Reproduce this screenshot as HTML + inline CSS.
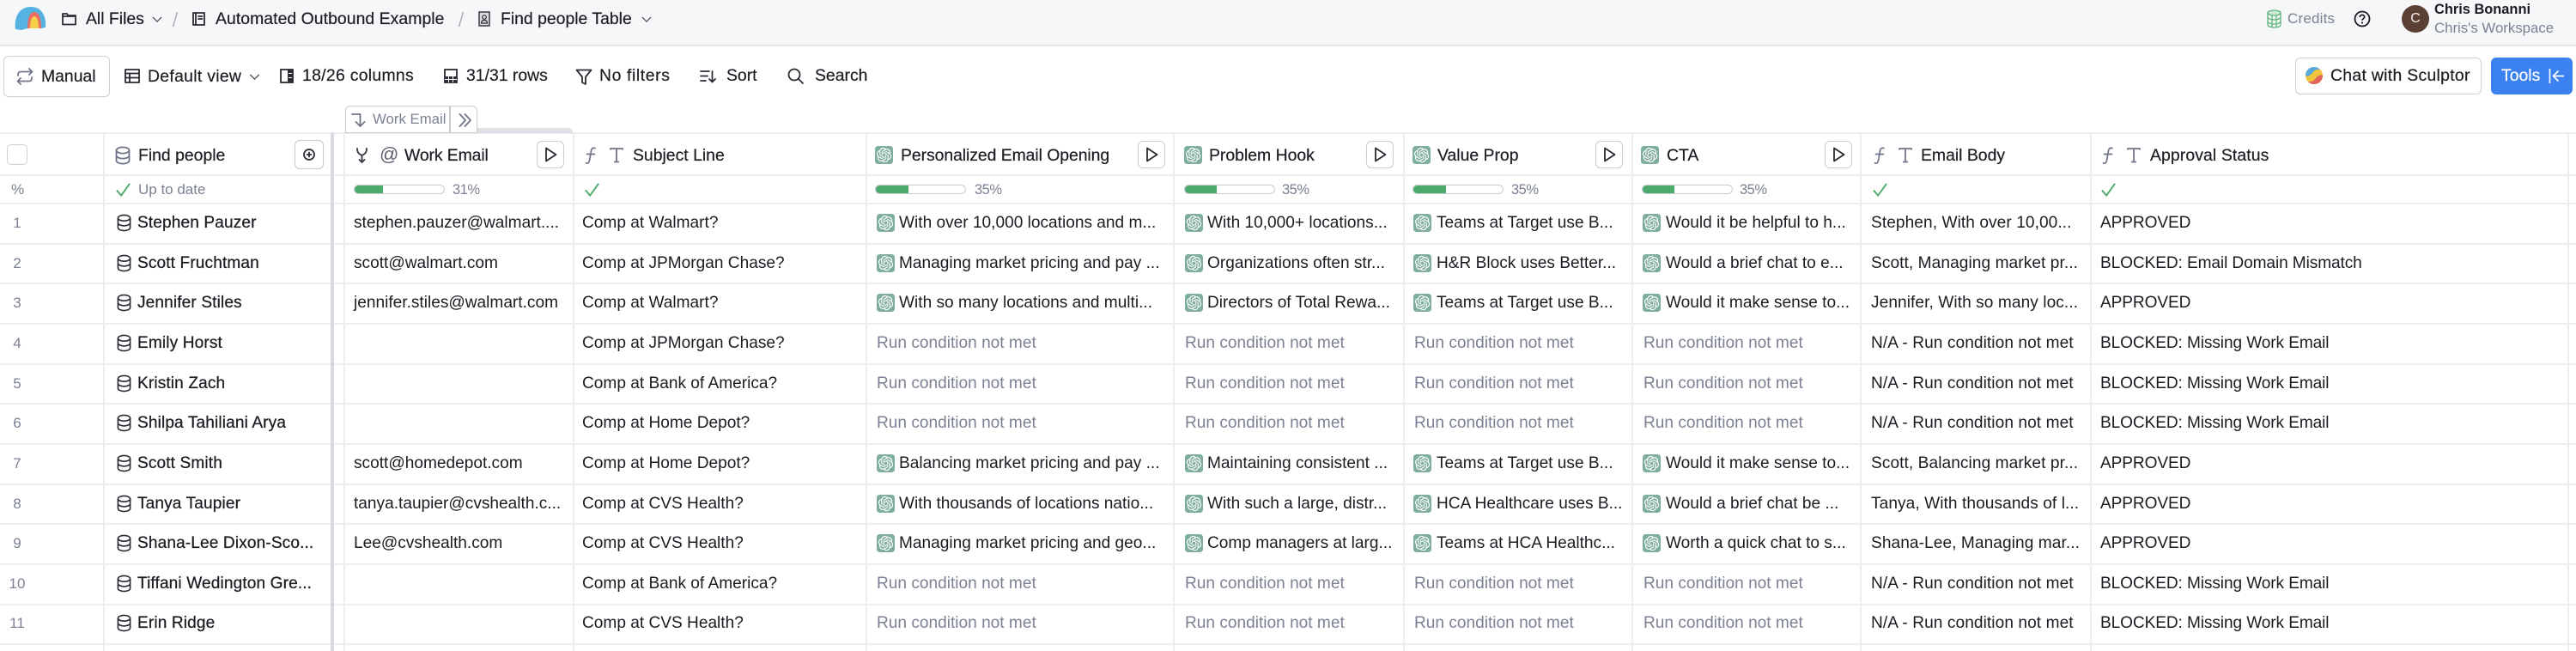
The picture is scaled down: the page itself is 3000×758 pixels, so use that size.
<!DOCTYPE html>
<html><head><meta charset="utf-8"><title>Find people Table</title>
<style>
*{box-sizing:border-box}
html,body{margin:0;padding:0;width:3000px;height:758px;overflow:hidden;background:#fff}
body{position:relative;font-family:"Liberation Sans",sans-serif;font-size:19.4px;letter-spacing:0;color:#1b1c22}
.t{position:absolute;white-space:nowrap;line-height:24px;-webkit-text-stroke:.2px currentColor}
.t.g{-webkit-text-stroke:0}
.g{color:#7c8193}
svg{position:absolute;overflow:visible}
.s{fill:none;stroke:#2a2b33;stroke-width:1.8;stroke-linecap:round;stroke-linejoin:round}
.sg{fill:none;stroke:#70758a;stroke-width:1.8;stroke-linecap:round;stroke-linejoin:round}
.v{position:absolute;top:155px;height:603px;width:2px;background:#eceef2}
.h{position:absolute;left:0;width:3000px;height:2px;background:#eceef2}
.r{position:absolute;left:0;width:3000px;height:46px;font-size:19.1px}
.r span{position:absolute;top:0;line-height:46.5px;white-space:nowrap}
.n{width:40px;left:0;text-align:center;color:#7c8193;font-size:17px}
.a{left:160px;letter-spacing:.12px;-webkit-text-stroke:.25px currentColor}.b{left:412px}.c{left:678px}.d{left:1047px}.e{left:1406px}.f{left:1673px}.i{left:1940px}.j{left:2179px;letter-spacing:.08px}.k{left:2446px;letter-spacing:-.1px}
.d.g,.e.g,.f.g,.i.g{margin-left:-26px}
.pb{position:absolute;top:215px;height:11px;width:106px;border:1px solid #c9cbd3;border-radius:6px;overflow:hidden;background:#fff}
.pb i{display:block;height:100%;background:#4caa6c}
.pl{position:absolute;top:164px;height:32px;width:32px;border:1px solid #c9cbd3;border-radius:6px;background:#fff}
.pc{font-size:16.5px;letter-spacing:-.5px;top:209px}
</style></head><body>
<svg width="0" height="0" style="position:absolute">
<defs>
<symbol id="ai" viewBox="0 0 21 21"><rect width="21" height="21" rx="3.5" fill="#7fae9d"/><g transform="translate(1.9 1.9) scale(.72)"><path fill="#fff" d="M22.2819 9.8211a5.9847 5.9847 0 0 0-.5157-4.9108 6.0462 6.0462 0 0 0-6.5098-2.9A6.0651 6.0651 0 0 0 4.9807 4.1818a5.9847 5.9847 0 0 0-3.9977 2.9 6.0462 6.0462 0 0 0 .7427 7.0966 5.98 5.98 0 0 0 .511 4.9107 6.051 6.051 0 0 0 6.5146 2.9001A5.9847 5.9847 0 0 0 13.2599 24a6.0557 6.0557 0 0 0 5.7718-4.2058 5.9894 5.9894 0 0 0 3.9977-2.9001 6.0557 6.0557 0 0 0-.7475-7.0729zm-9.022 12.6081a4.4755 4.4755 0 0 1-2.8764-1.0408l.1419-.0804 4.7783-2.7582a.7948.7948 0 0 0 .3927-.6813v-6.7369l2.02 1.1686a.071.071 0 0 1 .038.052v5.5826a4.504 4.504 0 0 1-4.4945 4.4944zm-9.6607-4.1254a4.4708 4.4708 0 0 1-.5346-3.0137l.142.0852 4.783 2.7582a.7712.7712 0 0 0 .7806 0l5.8428-3.3685v2.3324a.0804.0804 0 0 1-.0332.0615L9.74 19.9502a4.4992 4.4992 0 0 1-6.1408-1.6464zM2.3408 7.8956a4.485 4.485 0 0 1 2.3655-1.9728V11.6a.7664.7664 0 0 0 .3879.6765l5.8144 3.3543-2.0201 1.1685a.0757.0757 0 0 1-.071 0l-4.8303-2.7865A4.504 4.504 0 0 1 2.3408 7.872zm16.5963 3.8558L13.1038 8.364 15.1192 7.2a.0757.0757 0 0 1 .071 0l4.8303 2.7913a4.4944 4.4944 0 0 1-.6765 8.1042v-5.6772a.79.79 0 0 0-.407-.667zm2.0107-3.0231l-.142-.0852-4.7735-2.7818a.7759.7759 0 0 0-.7854 0L9.409 9.2297V6.8974a.0662.0662 0 0 1 .0284-.0615l4.8303-2.7866a4.4992 4.4992 0 0 1 6.6802 4.66zM8.3065 12.863l-2.02-1.1638a.0804.0804 0 0 1-.038-.0567V6.0742a4.4992 4.4992 0 0 1 7.3757-3.4537l-.142.0805L8.704 5.459a.7948.7948 0 0 0-.3927.6813zm1.0976-2.3654l2.602-1.4998 2.6069 1.4998v2.9994l-2.5974 1.4997-2.6067-1.4997Z"/></g></symbol>
<symbol id="db" viewBox="0 0 18 22"><g fill="none" stroke="#2a2b33" stroke-width="1.7"><ellipse cx="9" cy="5" rx="7.5" ry="3.6"/><path d="M1.5 5v12c0 2 3.4 3.6 7.5 3.6s7.5-1.6 7.5-3.6V5M1.5 11c0 2 3.4 3.6 7.5 3.6s7.500-1.600 7.500-3.600"/></g></symbol>
<symbol id="dbg" viewBox="0 0 18 22"><g fill="none" stroke="#70758a" stroke-width="1.8"><ellipse cx="9" cy="5" rx="7.500" ry="3.600"/><path d="M1.500 5v12c0 2 3.400 3.600 7.500 3.600s7.500-1.600 7.500-3.600V5M1.500 11c0 2 3.400 3.600 7.500 3.600s7.500-1.600 7.500-3.600"/></g></symbol>
<symbol id="pl" viewBox="0 0 32 32"><path d="M11 8.500v15L22.500 16z" fill="none" stroke="#2a2b33" stroke-width="1.800" stroke-linejoin="round"/></symbol>
<symbol id="ck" viewBox="0 0 20 20"><path d="M2 11l5.500 6.500L18 3" fill="none" stroke="#4caa6c" stroke-width="2"/></symbol>
<symbol id="fT" viewBox="0 0 46 22"><path d="M13 2.500c-2.500-.8-4 .2-4.500 3L6.500 17c-.5 2.600-1.800 3.500-4 2.800M3.500 9.500h9" fill="none" stroke="#70758a" stroke-width="1.700" stroke-linecap="round"/><path d="M31 4.500V3h14v1.500M38 3v15M35 18.500h6" fill="none" stroke="#70758a" stroke-width="1.800"/></symbol>
<symbol id="ch" viewBox="0 0 14 8"><path d="M1 1l6 6 6-6" fill="none" stroke="#50535f" stroke-width="1.500"/></symbol>
</defs></svg>

<!-- top bar -->
<div style="position:absolute;left:0;top:0;width:3000px;height:54px;background:#f6f7f9;border-bottom:2px solid #e6e7eb"></div>
<svg style="left:17px;top:7px" width="38" height="30" viewBox="0 0 38 30"><path d="M1 27C-1 12 6 1 19 1S37 12 36 25l-5 1H15L8 28z" fill="#55b3e2"/><path d="M15 26C15 13 18 7 23 7s8 6 8 19z" fill="#ea6f67"/><path d="M18 26c0-9 2-14 5-14s5 5 5 14z" fill="#f7d046"/></svg>
<svg style="left:72px;top:14px" width="17" height="16" viewBox="0 0 17 16"><path d="M1 14.500V2h5l1.500 2H16v10.500zM1 5h15" class="s" stroke-width="1.500"/></svg>
<span class="t" style="left:100px;top:10px">All Files</span>
<svg style="left:177px;top:19px" width="12" height="7"><use href="#ch" width="12" height="7"/></svg>
<svg style="left:200px;top:13px" width="8" height="19"><path d="M6.500 1L1.500 18" stroke="#a9acb6" stroke-width="1.500"/></svg>
<svg style="left:224px;top:14px" width="15" height="16" viewBox="0 0 15 16"><path d="M1 1h13v14H1zM4 1v14M7 5h4.500M7 8h4.500" class="s" stroke-width="1.500"/></svg>
<span class="t" style="left:251px;top:10px;letter-spacing:.05px">Automated Outbound Example</span>
<svg style="left:533px;top:13px" width="8" height="19"><path d="M6.500 1L1.500 18" stroke="#a9acb6" stroke-width="1.500"/></svg>
<svg style="left:557px;top:13px" width="14" height="18" viewBox="0 0 14 18"><rect x="1" y="1" width="12" height="16" fill="#dcdde2" stroke="#2a2b33" stroke-width="1.400"/><circle cx="7" cy="7" r="2.300" fill="none" stroke="#2a2b33" stroke-width="1.200"/><path d="M3.500 14c0-2.500 1.500-3.500 3.500-3.500s3.500 1 3.500 3.500z" fill="none" stroke="#2a2b33" stroke-width="1.200"/></svg>
<span class="t" style="left:583px;top:10px">Find people Table</span>
<svg style="left:747px;top:19px" width="12" height="7"><use href="#ch" width="12" height="7"/></svg>

<svg style="left:2640px;top:11px" width="17" height="22" viewBox="0 0 17 22"><ellipse cx="8.500" cy="4" rx="7.500" ry="3" fill="#cfe8d6" stroke="#5db67a" stroke-width="1.300"/><path d="M1 4v14c0 1.700 3.400 3 7.500 3s7.500-1.300 7.500-3V4M1 9c0 1.700 3.400 3 7.500 3S16 10.700 16 9M1 14c0 1.700 3.400 3 7.500 3s7.500-1.300 7.500-3M6 7v14M11 7v14" fill="none" stroke="#5db67a" stroke-width="1.300"/></svg>
<span class="t g" style="left:2664px;top:10px;font-size:17px;letter-spacing:.2px">Credits</span>
<svg style="left:2741px;top:12px" width="20" height="20" viewBox="0 0 20 20"><circle cx="10" cy="10" r="8.500" fill="none" stroke="#1b1c22" stroke-width="1.800"/><path d="M7.300 8c0-1.700 1.200-2.600 2.700-2.600s2.700 .9 2.700 2.400c0 2-2.700 2-2.700 4" fill="none" stroke="#1b1c22" stroke-width="1.700"/><circle cx="10" cy="14.500" r="1.100" fill="#1b1c22"/></svg>
<div style="position:absolute;left:2797px;top:6px;width:32px;height:32px;border-radius:50%;background:#5a4035;color:#f3ece8;font-size:16px;line-height:32px;text-align:center">C</div>
<span class="t" style="left:2835px;top:-1px;font-size:16.400px;font-weight:700;-webkit-text-stroke:0">Chris Bonanni</span>
<span class="t g" style="left:2835px;top:21px;font-size:16.800px">Chris's Workspace</span>

<!-- toolbar -->
<div style="position:absolute;left:4px;top:65px;width:124px;height:48px;border:1.500px solid #cdcfd6;border-radius:6px"></div>
<svg style="left:19px;top:79px" width="20" height="20" viewBox="0 0 20 20"><path d="M2 9V7.500A3 3 0 0 1 5 4.500h13M15 1l3.500 3.500L15 8M18 11v1.500a3 3 0 0 1-3 3H2M5 19l-3.500-3.500L5 12" class="sg" stroke-width="2"/></svg>
<span class="t" style="left:48px;top:77px">Manual</span>
<svg style="left:145px;top:80px" width="18" height="17" viewBox="0 0 18 17"><path d="M1 1h16v15H1zM1 5.500h16M1 10.500h16M6 5.500V16" class="s"/></svg>
<span class="t" style="left:172px;top:77px;letter-spacing:.3px">Default view</span>
<svg style="left:290px;top:86px" width="13" height="7"><use href="#ch" width="13" height="7"/></svg>
<svg style="left:326px;top:80px" width="16" height="17" viewBox="0 0 16 17"><rect x="1" y="1" width="14" height="15" fill="none" stroke="#2a2b33" stroke-width="1.800"/><rect x="9" y="1" width="6" height="15" fill="#2a2b33"/><path d="M10 5.500h4M10 10.500h4" stroke="#fff"/></svg>
<span class="t" style="left:352px;top:76px;letter-spacing:.3px">18/26 columns</span>
<svg style="left:517px;top:80px" width="16" height="17" viewBox="0 0 16 17"><rect x="1" y="1" width="14" height="15" fill="none" stroke="#2a2b33" stroke-width="1.800"/><rect x="1" y="9" width="14" height="7" fill="#2a2b33"/><path d="M5.500 9v7M10.500 9v7M1 12.500h14" stroke="#fff"/></svg>
<span class="t" style="left:543px;top:76px">31/31 rows</span>
<svg style="left:670px;top:80px" width="20" height="19" viewBox="0 0 20 19"><path d="M1.500 1.500h17L12 9.500V18l-4-2V9.500z" class="s"/></svg>
<span class="t" style="left:698px;top:76px;letter-spacing:.6px">No filters</span>
<svg style="left:815px;top:80px" width="20" height="18" viewBox="0 0 20 18"><path d="M1 3h10M1 8.500h8M1 14h6M14.500 3v12M11 12l3.500 3.500L18 12" class="s"/></svg>
<span class="t" style="left:846px;top:76px">Sort</span>
<svg style="left:917px;top:79px" width="19" height="19" viewBox="0 0 19 19"><circle cx="8" cy="8" r="6.500" class="s" stroke-width="2"/><path d="M13 13l5 5" class="s" stroke-width="2"/></svg>
<span class="t" style="left:949px;top:76px">Search</span>

<div style="position:absolute;left:2673px;top:67px;width:217px;height:43px;border:1.500px solid #cdcfd6;border-radius:6px"></div>
<svg style="left:2685px;top:78px" width="20" height="20" viewBox="0 0 20 20"><circle cx="10" cy="10" r="10" fill="#f0c33c"/><path d="M0 10A10 10 0 0 1 10 0c3 0 5 1 7 3-6-1-8 3-10 5-3 3-5 3-7 2z" fill="#56a8dc"/><path d="M20 10a10 10 0 0 1-10 10c-3 0-5-1-7-3 6 1 8-3 10-5 3-3 5-3 7-2z" fill="#e0645a"/></svg>
<span class="t" style="left:2714px;top:76px;letter-spacing:.3px">Chat with Sculptor</span>
<div style="position:absolute;left:2901px;top:67px;width:95px;height:43px;background:#3b82f0;border-radius:6px"></div>
<span class="t" style="left:2913px;top:76px;color:#fff">Tools</span>
<svg style="left:2968px;top:79px" width="19" height="19" viewBox="0 0 19 19"><path d="M1.500 1v17M18 9.500H6M11.500 3.500l-6 6 6 6" fill="none" stroke="#fff" stroke-width="1.700"/></svg>

<!-- grid -->
<div class="h" style="top:154px"></div><div class="h" style="top:203px"></div><div class="h" style="top:236px"></div>
<div class="h" style="top:283px"></div><div class="h" style="top:329px"></div><div class="h" style="top:376px"></div><div class="h" style="top:423px"></div><div class="h" style="top:469px"></div><div class="h" style="top:516px"></div><div class="h" style="top:563px"></div><div class="h" style="top:609px"></div><div class="h" style="top:656px"></div><div class="h" style="top:703px"></div><div class="h" style="top:749px"></div>
<div class="v" style="left:120px"></div><div class="v" style="left:400px"></div><div class="v" style="left:667px"></div><div class="v" style="left:1008px"></div><div class="v" style="left:1366px"></div><div class="v" style="left:1634px"></div><div class="v" style="left:1900px"></div><div class="v" style="left:2166px"></div><div class="v" style="left:2434px"></div><div class="v" style="left:2990px"></div>
<div style="position:absolute;left:385px;top:155px;width:4px;height:603px;background:#d9dae1"></div>

<!-- work email tab -->
<div style="position:absolute;left:556px;top:149px;width:111px;height:6px;background:#dfe0e6;border-top-right-radius:5px"></div>
<div style="position:absolute;left:402px;top:123px;width:154px;height:32px;background:#fff;border:1.500px solid #c9cbd3;border-radius:6px 6px 0 0"></div>
<div style="position:absolute;left:523px;top:123px;width:1.500px;height:32px;background:#c9cbd3"></div>
<svg style="left:409px;top:132px" width="18" height="16" viewBox="0 0 18 16"><path d="M1 1h9.500v13M5.500 10l5 5 5-5" class="sg" stroke-width="1.400"/></svg>
<span class="t g" style="left:434px;top:127px;font-size:16.800px;line-height:24px">Work Email</span>
<svg style="left:534px;top:132px" width="16" height="16" viewBox="0 0 16 16"><path d="M1.500 1L8 8l-6.500 7M7.500 1L14 8l-6.500 7" class="sg" stroke-width="1.300"/></svg>

<!-- header -->
<div style="position:absolute;left:8px;top:168px;width:24px;height:24px;border:1.500px solid #cdcfd6;border-radius:5px"></div>
<svg style="left:134px;top:170px" width="18" height="22"><use href="#dbg" width="18" height="22"/></svg>
<span class="t" style="left:161px;top:169px">Find people</span>
<div class="pl" style="left:343px;top:163px;width:34px;height:34px"></div>
<svg style="left:353px;top:173px" width="14" height="14" viewBox="0 0 14 14"><circle cx="7" cy="7" r="6" class="s" stroke-width="1.500"/><path d="M4.500 7h5M7 4.500v5" class="s" stroke-width="1.500"/></svg>

<svg style="left:415px;top:172px" width="13" height="18" viewBox="0 0 13 18"><path d="M1 1c0 5 2 6 5.500 8 3.500-2 5.500-3 5.500-8M6.500 9v8M3.500 14l3 3 3-3" fill="none" stroke="#3a3c46" stroke-width="1.900" stroke-linecap="round" stroke-linejoin="round"/></svg>
<span class="t" style="left:442px;top:168px;font-size:22px;color:#5b5f70;-webkit-text-stroke:0">@</span>
<span class="t" style="left:471px;top:169px;letter-spacing:-.1px">Work Email</span>
<div class="pl" style="left:625px"></div><svg style="left:625px;top:164px" width="32" height="32"><use href="#pl" width="32" height="32"/></svg>

<svg style="left:680px;top:170px" width="46" height="22"><use href="#fT" width="46" height="22"/></svg>
<span class="t" style="left:737px;top:169px">Subject Line</span>

<svg style="left:1019px;top:170px" width="21" height="21"><use href="#ai" width="21" height="21"/></svg>
<span class="t" style="left:1049px;top:169px;letter-spacing:-.06px">Personalized Email Opening</span>
<div class="pl" style="left:1325px"></div><svg style="left:1325px;top:164px" width="32" height="32"><use href="#pl" width="32" height="32"/></svg>

<svg style="left:1379px;top:170px" width="21" height="21"><use href="#ai" width="21" height="21"/></svg>
<span class="t" style="left:1408px;top:169px">Problem Hook</span>
<div class="pl" style="left:1591px"></div><svg style="left:1591px;top:164px" width="32" height="32"><use href="#pl" width="32" height="32"/></svg>

<svg style="left:1645px;top:170px" width="21" height="21"><use href="#ai" width="21" height="21"/></svg>
<span class="t" style="left:1674px;top:169px">Value Prop</span>
<div class="pl" style="left:1858px"></div><svg style="left:1858px;top:164px" width="32" height="32"><use href="#pl" width="32" height="32"/></svg>

<svg style="left:1911px;top:170px" width="21" height="21"><use href="#ai" width="21" height="21"/></svg>
<span class="t" style="left:1941px;top:169px">CTA</span>
<div class="pl" style="left:2125px"></div><svg style="left:2125px;top:164px" width="32" height="32"><use href="#pl" width="32" height="32"/></svg>

<svg style="left:2181px;top:170px" width="46" height="22"><use href="#fT" width="46" height="22"/></svg>
<span class="t" style="left:2237px;top:169px">Email Body</span>
<svg style="left:2447px;top:170px" width="46" height="22"><use href="#fT" width="46" height="22"/></svg>
<span class="t" style="left:2504px;top:169px;letter-spacing:.1px">Approval Status</span>

<!-- stats -->
<span class="t g" style="left:13px;top:209px;font-size:17px">%</span>
<svg style="left:134px;top:211px" width="19" height="19"><use href="#ck" width="19" height="19"/></svg>
<span class="t g" style="left:161px;top:209px;font-size:17px">Up to date</span>
<div class="pb" style="left:412px"><i style="width:33px"></i></div><span class="t g pc" style="left:527px">31%</span>
<svg style="left:680px;top:211px" width="19" height="19"><use href="#ck" width="19" height="19"/></svg>
<div class="pb" style="left:1019px"><i style="width:38px"></i></div><span class="t g pc" style="left:1135px">35%</span>
<div class="pb" style="left:1379px"><i style="width:37px"></i></div><span class="t g pc" style="left:1493px">35%</span>
<div class="pb" style="left:1645px"><i style="width:38px"></i></div><span class="t g pc" style="left:1760px">35%</span>
<div class="pb" style="left:1912px"><i style="width:37px"></i></div><span class="t g pc" style="left:2026px">35%</span>
<svg style="left:2180px;top:211px" width="19" height="19"><use href="#ck" width="19" height="19"/></svg>
<svg style="left:2446px;top:211px" width="19" height="19"><use href="#ck" width="19" height="19"/></svg>

<!-- rows -->
<div class="r" style="top:237px"><span class="n">1</span><svg style="left:136px;top:12px" width="17" height="21"><use href="#db" width="17" height="21"/></svg><span class="a">Stephen Pauzer</span><span class="b">stephen.pauzer@walmart....</span><span class="c">Comp at Walmart?</span><svg style="left:1021px;top:12px" width="21" height="21"><use href="#ai" width="21" height="21"/></svg><span class="d">With over 10,000 locations and m...</span><svg style="left:1380px;top:12px" width="21" height="21"><use href="#ai" width="21" height="21"/></svg><span class="e">With 10,000+ locations...</span><svg style="left:1646px;top:12px" width="21" height="21"><use href="#ai" width="21" height="21"/></svg><span class="f">Teams at Target use B...</span><svg style="left:1913px;top:12px" width="21" height="21"><use href="#ai" width="21" height="21"/></svg><span class="i">Would it be helpful to h...</span><span class="j">Stephen, With over 10,00...</span><span class="k">APPROVED</span></div>

<div class="r" style="top:284px"><span class="n">2</span><svg style="left:136px;top:12px" width="17" height="21"><use href="#db" width="17" height="21"/></svg><span class="a">Scott Fruchtman</span><span class="b">scott@walmart.com</span><span class="c">Comp at JPMorgan Chase?</span><svg style="left:1021px;top:12px" width="21" height="21"><use href="#ai" width="21" height="21"/></svg><span class="d">Managing market pricing and pay ...</span><svg style="left:1380px;top:12px" width="21" height="21"><use href="#ai" width="21" height="21"/></svg><span class="e">Organizations often str...</span><svg style="left:1646px;top:12px" width="21" height="21"><use href="#ai" width="21" height="21"/></svg><span class="f">H&amp;R Block uses Better...</span><svg style="left:1913px;top:12px" width="21" height="21"><use href="#ai" width="21" height="21"/></svg><span class="i">Would a brief chat to e...</span><span class="j">Scott, Managing market pr...</span><span class="k">BLOCKED: Email Domain Mismatch</span></div>

<div class="r" style="top:330px"><span class="n">3</span><svg style="left:136px;top:12px" width="17" height="21"><use href="#db" width="17" height="21"/></svg><span class="a">Jennifer Stiles</span><span class="b">jennifer.stiles@walmart.com</span><span class="c">Comp at Walmart?</span><svg style="left:1021px;top:12px" width="21" height="21"><use href="#ai" width="21" height="21"/></svg><span class="d">With so many locations and multi...</span><svg style="left:1380px;top:12px" width="21" height="21"><use href="#ai" width="21" height="21"/></svg><span class="e">Directors of Total Rewa...</span><svg style="left:1646px;top:12px" width="21" height="21"><use href="#ai" width="21" height="21"/></svg><span class="f">Teams at Target use B...</span><svg style="left:1913px;top:12px" width="21" height="21"><use href="#ai" width="21" height="21"/></svg><span class="i">Would it make sense to...</span><span class="j">Jennifer, With so many loc...</span><span class="k">APPROVED</span></div>

<div class="r" style="top:377px"><span class="n">4</span><svg style="left:136px;top:12px" width="17" height="21"><use href="#db" width="17" height="21"/></svg><span class="a">Emily Horst</span><span class="c">Comp at JPMorgan Chase?</span><span class="d g">Run condition not met</span><span class="e g">Run condition not met</span><span class="f g">Run condition not met</span><span class="i g">Run condition not met</span><span class="j">N/A - Run condition not met</span><span class="k">BLOCKED: Missing Work Email</span></div>

<div class="r" style="top:424px"><span class="n">5</span><svg style="left:136px;top:12px" width="17" height="21"><use href="#db" width="17" height="21"/></svg><span class="a">Kristin Zach</span><span class="c">Comp at Bank of America?</span><span class="d g">Run condition not met</span><span class="e g">Run condition not met</span><span class="f g">Run condition not met</span><span class="i g">Run condition not met</span><span class="j">N/A - Run condition not met</span><span class="k">BLOCKED: Missing Work Email</span></div>

<div class="r" style="top:470px"><span class="n">6</span><svg style="left:136px;top:12px" width="17" height="21"><use href="#db" width="17" height="21"/></svg><span class="a">Shilpa Tahiliani Arya</span><span class="c">Comp at Home Depot?</span><span class="d g">Run condition not met</span><span class="e g">Run condition not met</span><span class="f g">Run condition not met</span><span class="i g">Run condition not met</span><span class="j">N/A - Run condition not met</span><span class="k">BLOCKED: Missing Work Email</span></div>

<div class="r" style="top:517px"><span class="n">7</span><svg style="left:136px;top:12px" width="17" height="21"><use href="#db" width="17" height="21"/></svg><span class="a">Scott Smith</span><span class="b">scott@homedepot.com</span><span class="c">Comp at Home Depot?</span><svg style="left:1021px;top:12px" width="21" height="21"><use href="#ai" width="21" height="21"/></svg><span class="d">Balancing market pricing and pay ...</span><svg style="left:1380px;top:12px" width="21" height="21"><use href="#ai" width="21" height="21"/></svg><span class="e">Maintaining consistent ...</span><svg style="left:1646px;top:12px" width="21" height="21"><use href="#ai" width="21" height="21"/></svg><span class="f">Teams at Target use B...</span><svg style="left:1913px;top:12px" width="21" height="21"><use href="#ai" width="21" height="21"/></svg><span class="i">Would it make sense to...</span><span class="j">Scott, Balancing market pr...</span><span class="k">APPROVED</span></div>

<div class="r" style="top:564px"><span class="n">8</span><svg style="left:136px;top:12px" width="17" height="21"><use href="#db" width="17" height="21"/></svg><span class="a">Tanya Taupier</span><span class="b">tanya.taupier@cvshealth.c...</span><span class="c">Comp at CVS Health?</span><svg style="left:1021px;top:12px" width="21" height="21"><use href="#ai" width="21" height="21"/></svg><span class="d">With thousands of locations natio...</span><svg style="left:1380px;top:12px" width="21" height="21"><use href="#ai" width="21" height="21"/></svg><span class="e">With such a large, distr...</span><svg style="left:1646px;top:12px" width="21" height="21"><use href="#ai" width="21" height="21"/></svg><span class="f">HCA Healthcare uses B...</span><svg style="left:1913px;top:12px" width="21" height="21"><use href="#ai" width="21" height="21"/></svg><span class="i">Would a brief chat be ...</span><span class="j">Tanya, With thousands of l...</span><span class="k">APPROVED</span></div>

<div class="r" style="top:610px"><span class="n">9</span><svg style="left:136px;top:12px" width="17" height="21"><use href="#db" width="17" height="21"/></svg><span class="a">Shana-Lee Dixon-Sco...</span><span class="b">Lee@cvshealth.com</span><span class="c">Comp at CVS Health?</span><svg style="left:1021px;top:12px" width="21" height="21"><use href="#ai" width="21" height="21"/></svg><span class="d">Managing market pricing and geo...</span><svg style="left:1380px;top:12px" width="21" height="21"><use href="#ai" width="21" height="21"/></svg><span class="e">Comp managers at larg...</span><svg style="left:1646px;top:12px" width="21" height="21"><use href="#ai" width="21" height="21"/></svg><span class="f">Teams at HCA Healthc...</span><svg style="left:1913px;top:12px" width="21" height="21"><use href="#ai" width="21" height="21"/></svg><span class="i">Worth a quick chat to s...</span><span class="j">Shana-Lee, Managing mar...</span><span class="k">APPROVED</span></div>

<div class="r" style="top:657px"><span class="n">10</span><svg style="left:136px;top:12px" width="17" height="21"><use href="#db" width="17" height="21"/></svg><span class="a">Tiffani Wedington Gre...</span><span class="c">Comp at Bank of America?</span><span class="d g">Run condition not met</span><span class="e g">Run condition not met</span><span class="f g">Run condition not met</span><span class="i g">Run condition not met</span><span class="j">N/A - Run condition not met</span><span class="k">BLOCKED: Missing Work Email</span></div>

<div class="r" style="top:703px"><span class="n">11</span><svg style="left:136px;top:12px" width="17" height="21"><use href="#db" width="17" height="21"/></svg><span class="a">Erin Ridge</span><span class="c">Comp at CVS Health?</span><span class="d g">Run condition not met</span><span class="e g">Run condition not met</span><span class="f g">Run condition not met</span><span class="i g">Run condition not met</span><span class="j">N/A - Run condition not met</span><span class="k">BLOCKED: Missing Work Email</span></div>
</body></html>
